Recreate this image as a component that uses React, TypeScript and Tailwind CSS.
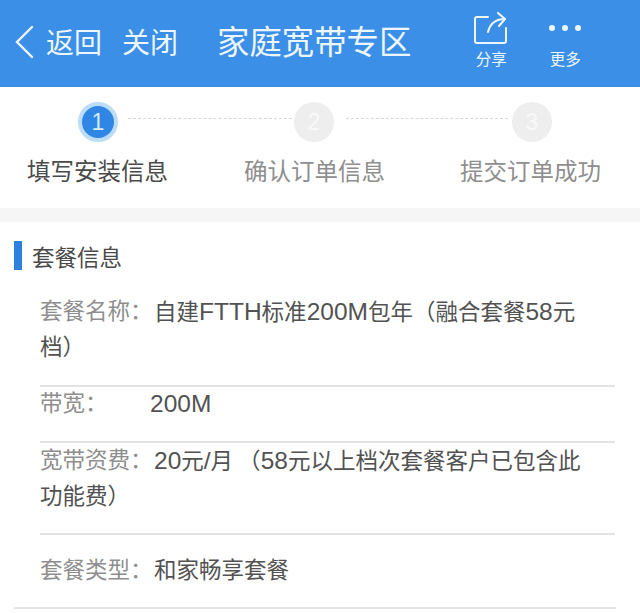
import type { ReactNode } from "react";

const cjk = { fontFamily: '"Liberation Sans", "Noto Sans CJK SC", sans-serif' };

// latin runs are a little wider in the picture than the cjk size gives
const L = ({ children }: { children: ReactNode }) => <span className="text-[24.5px]">{children}</span>;

function Row({
  label,
  labelClass = "w-[114px]",
  lines,
  className,
  innerClass = "",
}: {
  label: string;
  labelClass?: string;
  lines: ReactNode[];
  className: string;
  innerClass?: string;
}) {
  return (
    <div className={`text-[22.5px] leading-[36px] ${className}`}>
      <div className={`flex h-[36px] ${innerClass}`}>
        <span className={`${labelClass} shrink-0 text-[#8e8e8e]`}>{label}</span>
        <span className="whitespace-nowrap text-[#525252]">{lines[0]}</span>
      </div>
      {lines[1] && <div className="h-[36px] whitespace-nowrap text-[#525252]">{lines[1]}</div>}
    </div>
  );
}

function Step({ n, active }: { n: number; active?: boolean }) {
  return (
    <div
      className={`flex h-[40px] w-[40px] shrink-0 items-center justify-center rounded-full text-[23px] ${
        active
          ? "border-[4px] border-[#bcdcf8] bg-[#2f86e4] text-[#d8ebfc]"
          : "bg-[#eeeeee] text-[#f9f9f9]"
      }`}
    >
      {n}
    </div>
  );
}

export default function App() {
  return (
    <div className="h-[613px] w-[640px] overflow-hidden bg-white" style={cjk}>
      <header className="flex h-[87px] items-center bg-[#3b8fe6] text-[#eef6fd]">
        <svg width="20" height="34" viewBox="0 0 20 34" className="ml-[14px] mb-[3px]" fill="none" stroke="currentColor" strokeWidth="2.4" strokeLinecap="round">
          <path d="M18 2 L3 17 L18 32" />
        </svg>
        <span className="ml-[12px] text-[28px]">返回</span>
        <span className="ml-[20px] text-[28px]">关闭</span>
        <span className="ml-[39px] text-[32.4px] whitespace-nowrap">家庭宽带专区</span>
        <div className="ml-[59px] flex w-[42px] flex-col items-center self-start pt-[12px]">
          <svg width="34" height="32" viewBox="0 0 34 32" fill="none" stroke="currentColor" strokeWidth="2" strokeLinecap="round" strokeLinejoin="round">
            <path d="M14 5 H3 a2 2 0 0 0 -2 2 V29 a2 2 0 0 0 2 2 H30 a2 2 0 0 0 2 -2 V16" />
            <path d="M14 20 C16 12 22 7 31 7" />
            <path d="M24 1 L31 7 L25 14" />
          </svg>
          <span className="mt-[6px] text-[15.5px] leading-[20px]">分享</span>
        </div>
        <div className="ml-[32px] flex w-[42px] flex-col items-center self-start pt-[12px]">
          <div className="flex h-[32px] items-start gap-[7px] pt-[13px]">
            <i className="h-[6px] w-[6px] rounded-full bg-[#eef6fd]" />
            <i className="h-[6px] w-[6px] rounded-full bg-[#eef6fd]" />
            <i className="h-[6px] w-[6px] rounded-full bg-[#eef6fd]" />
          </div>
          <span className="mt-[6px] text-[15.5px] leading-[20px]">更多</span>
        </div>
      </header>

      <div className="h-[121px]">
        <div className="flex items-center pl-[78px] pt-[15px]">
          <Step n={1} active />
          <div className="ml-[10px] mr-[2px] mb-[8px] w-[164px] border-t border-dashed border-[#d8d8d8]" />
          <Step n={2} />
          <div className="ml-[12px] mr-[4px] mb-[8px] w-[162px] border-t border-dashed border-[#d8d8d8]" />
          <Step n={3} />
        </div>
        <div className="mt-[13px] flex pl-[27px] text-[23.5px] leading-[34px] whitespace-nowrap">
          <span className="w-[217px] text-[#4a4a4a]">填写安装信息</span>
          <span className="w-[216px] text-[#8e8e8e]">确认订单信息</span>
          <span className="text-[#8e8e8e]">提交订单成功</span>
        </div>
      </div>

      <div className="h-[14px] bg-[#f6f6f6]" />

      <section className="pt-[19px]">
        <div className="flex items-center pl-[14px]">
          <div className="h-[29px] w-[8px] bg-[#2f7fdc]" />
          <h2 className="ml-[10px] h-[29px] pt-[3px] text-[22.5px] leading-[29px] text-[#4a4a4a]">套餐信息</h2>
        </div>
      </section>

      <div className="ml-[40px] mr-[25px] mt-[21px]">
        <Row
          label="套餐名称："
          lines={[
            <>自建<L>FTTH</L>标准<L>200M</L>包年（融合套餐<L>58</L>元</>,
            "档）",
          ]}
          className="h-[96px] border-b-2 border-[#e4e4e4] pt-[3px]"
        />
        <Row label="带宽：" labelClass="w-[110px]" lines={[<L>200M</L>]} className="h-[57px] border-b-2 border-[#e4e4e4]" innerClass="-mt-[1px]" />
        <Row
          label="宽带资费："
          lines={[
            <><L>20</L>元<L>/</L>月<span className="ml-[5px]">（</span><L>58</L>元以上档次套餐客户已包含此</>,
            "功能费）",
          ]}
          className="h-[92px] border-b-2 border-[#e4e4e4]"
        />
      </div>
      <div className="pl-[14px] pr-[24px]">
        <div className="h-[74px] border-b-2 border-[#e4e4e4] pl-[26px] pt-[18px]">
          <Row label="套餐类型：" lines={["和家畅享套餐"]} className="" />
        </div>
      </div>
    </div>
  );
}
